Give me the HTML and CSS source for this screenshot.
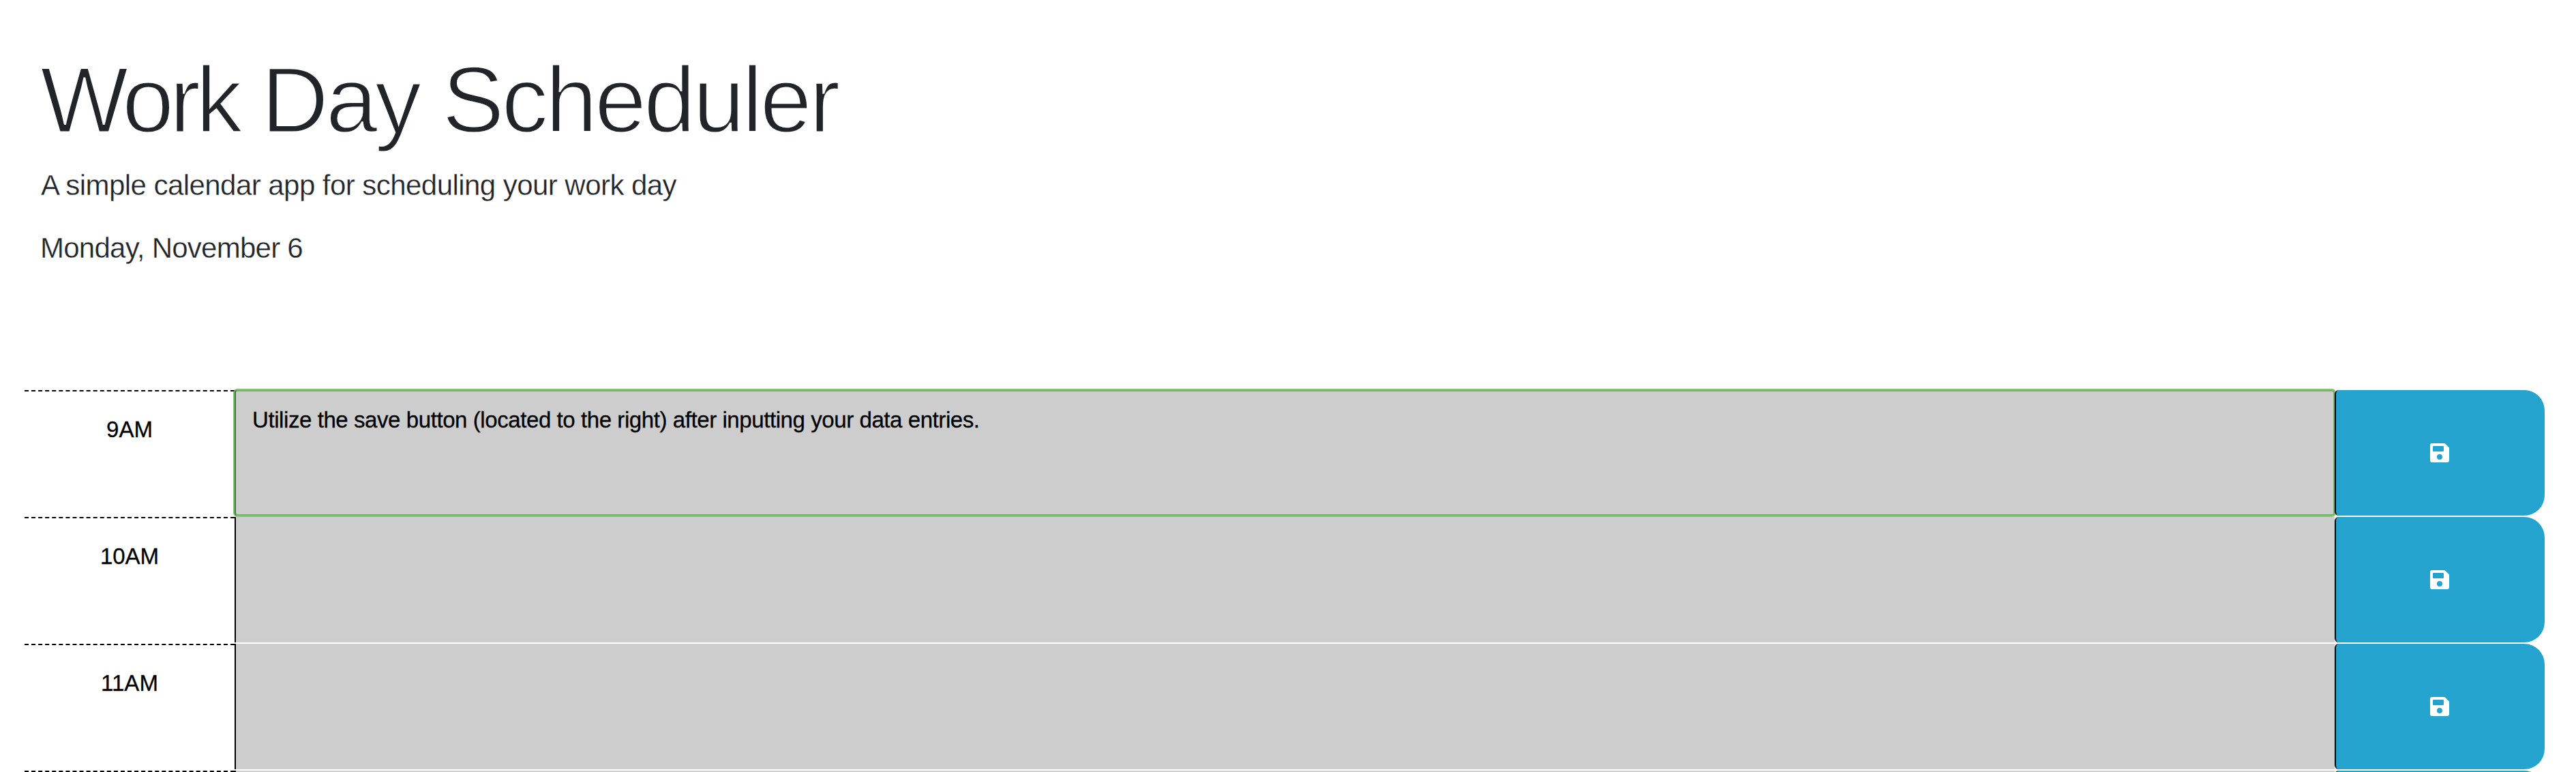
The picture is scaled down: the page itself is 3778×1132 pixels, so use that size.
FILE: index.html
```html
<!DOCTYPE html>
<html lang="en">
<head>
<meta charset="utf-8">
<title>Work Day Scheduler</title>
<link rel="stylesheet" href="styles.css">
</head>
<body>
<svg width="0" height="0" class="sprite" aria-hidden="true">
  <symbol id="save" viewBox="0 0 28 28">
    <path fill-rule="evenodd" d="M3 0H21.5L28 6.5V25a3 3 0 0 1-3 3H3a3 3 0 0 1-3-3V3a3 3 0 0 1 3-3ZM5 4a1 1 0 0 0-1 1v6a1 1 0 0 0 1 1H19a1 1 0 0 0 1-1V5a1 1 0 0 0-1-1ZM14 16a4 4 0 1 0 0 8a4 4 0 0 0 0-8Z"/>
  </symbol>
</svg>
<header class="header">
  <h1 class="title"><span class="first">Work</span> Day Scheduler</h1>
  <p class="lead">A simple calendar app for scheduling your work day</p>
  <p class="lead date">Monday, November 6</p>
</header>
<main class="schedule">
  <div class="row">
    <div class="hour">9AM</div>
    <div class="entry active">Utilize the save button (located to the right) after inputting your data entries.</div>
    <button class="save" aria-label="save"><svg class="icon"><use href="#save"/></svg></button>
  </div>
  <div class="row">
    <div class="hour">10AM</div>
    <div class="entry"></div>
    <button class="save" aria-label="save"><svg class="icon"><use href="#save"/></svg></button>
  </div>
  <div class="row">
    <div class="hour">11AM</div>
    <div class="entry"></div>
    <button class="save" aria-label="save"><svg class="icon"><use href="#save"/></svg></button>
  </div>
  <div class="row">
    <div class="hour"></div>
    <div class="entry"></div>
    <button class="save" aria-label="save"></button>
  </div>
</main>
</body>
</html>
```
FILE: styles.css
```css
* { box-sizing: border-box; }

html { overflow: hidden; }

body {
  margin: 0;
  height: 1132px;
  overflow: hidden;
  background: #fff;
  color: #212529;
  font-family: "Liberation Sans", Arial, sans-serif;
}

.sprite { display: block; }

.header {
  height: 572px;
  padding: 70px 60px 0;
}

/* A stroke in the page colour thins the regular weight to a light one. */
.title {
  margin: 0 0 18px -1px;
  font-size: 137px;
  font-weight: 400;
  line-height: 154px;
  letter-spacing: -4.1px;
  -webkit-text-stroke: 2.8px #fff;
}

.first { letter-spacing: -6.8px; }

.lead {
  margin: 0 0 32px;
  font-size: 42px;
  line-height: 60px;
  letter-spacing: -0.55px;
  -webkit-text-stroke: 0.3px #fff;
}

.date {
  margin-left: -1px;
  letter-spacing: -0.75px;
}

.schedule { padding: 0 46px 0 36px; }

.row {
  display: grid;
  grid-template-columns: 308px 3080px 308px;
  height: 186px;
  color: #000;
  font-size: 33px;
  line-height: 48px;
  -webkit-text-stroke: 0.3px #000;
}

.hour {
  border-top: 2px dashed #000;
  padding-top: 32px;
  text-align: center;
}

.entry {
  height: 184px;
  padding: 20px 24px;
  border-left: 2px solid #000;
  background: #cdcdcd;
  letter-spacing: -0.42px;
}

.active {
  border-radius: 4px;
  outline: 4px solid rgba(85, 170, 70, 0.72);
  outline-offset: -2px;
}

.save {
  position: relative;
  height: 184px;
  padding: 0;
  display: flex;
  align-items: center;
  justify-content: center;
  border: 0;
  border-left: 2px solid #000;
  border-radius: 6px 30px 30px 6px;
  background: #24a3ce;
}

.icon {
  width: 28px;
  height: 28px;
  margin-right: 2px;
  fill: #fff;
}
```
